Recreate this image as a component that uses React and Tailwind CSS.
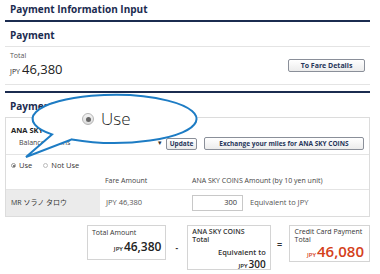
export default function App() {
  return (
    <div className="relative w-[380px] h-[274px] overflow-hidden bg-white text-[#333] font-['Open_Sans','Noto_Sans_CJK_JP',sans-serif]">
      <div className="w-[365px] ml-[5px]">
        <h1 className="h-[20px] pl-[5px] pt-[2px] text-[10px] font-bold text-[#1b2c50]">Payment Information Input</h1>
        <div className="h-[2px] bg-[#1b2c50]" />
        <h2 className="h-[25px] pl-[5px] pt-[6px] text-[10px] font-bold text-[#1b2c50] border-b border-[#e4e4e4]">Payment</h2>
        <div className="h-[38px] flex items-center justify-between pl-[5px] pr-[5px] border-b border-[#e4e4e4]">
          <div className="flex flex-col">
            <span className="text-[7px] leading-[8px] text-[#555]">Total</span>
            <span className="mt-[2px] text-[13px] leading-[14px] font-medium text-[#222]"><span className="text-[7px] mr-[2px]">JPY</span>46,380</span>
          </div>
          <button className="w-[77px] h-[13px] border border-[#8a8f99] rounded-[2px] bg-gradient-to-b from-white to-[#ececec] text-[7px] font-bold text-[#27365a] leading-[11px]">To Fare Details</button>
        </div>
        <div className="h-[2px] bg-[#1b2c50] mt-[6px]" />
        <h2 className="h-[24px] pl-[5px] pt-[6px] text-[10px] font-bold text-[#1b2c50]">Payment Method</h2>
        <div className="border border-[#dcdcdc]">
          <div className="h-[37px] border-b border-[#e4e4e4] pl-[5px] pt-[8px]">
            <div className="text-[7.5px] leading-[9px] font-bold text-[#222]">ANA SKY COINS</div>
            <div className="flex items-center mt-[2px]">
              <span className="pl-[8px] pr-[4px] w-[155px] flex justify-between text-[7px] text-[#444]">
                <span>Balance 0 Coins</span>
                <span className="text-[#333]">▾</span>
              </span>
              <button className="w-[31px] h-[12px] border border-[#8a8f99] rounded-[2px] bg-gradient-to-b from-white to-[#ececec] text-[6.5px] font-bold text-[#27365a]">Update</button>
              <button className="ml-[7px] w-[160px] h-[13px] border border-[#8a8f99] rounded-[2px] bg-gradient-to-b from-white to-[#ececec] text-[6.5px] font-bold text-[#27365a]">Exchange your miles for ANA SKY COINS</button>
            </div>
          </div>
          <div className="h-[19px] flex items-center pl-[5px] pt-[2px] text-[7.5px] text-[#333]">
            <span className="w-[5px] h-[5px] rounded-full border border-[#999] flex items-center justify-center"><span className="w-[2px] h-[2px] rounded-full bg-[#555]" /></span>
            <span className="ml-[3px]">Use</span>
            <span className="ml-[11px] w-[5px] h-[5px] rounded-full border border-[#bbb]" />
            <span className="ml-[3px]">Not Use</span>
          </div>
          <div className="h-[16px] flex items-center border-b border-[#e4e4e4] text-[7px] text-[#444]">
            <span className="w-[94px]" />
            <span className="w-[92px] pl-[5px]">Fare Amount</span>
            <span>ANA SKY COINS Amount (by 10 yen unit)</span>
          </div>
          <div className="h-[26px] flex items-stretch text-[7.5px] text-[#333]">
            <div className="w-[94px] bg-[#ebebeb] flex items-center pl-[5px] text-[7px]">MR ソラノ タロウ</div>
            <div className="w-[92px] flex items-center pl-[6px] text-[#555]">JPY 46,380</div>
            <div className="flex items-center">
              <div className="w-[51px] h-[16px] border border-[#c8c8c8] flex items-center justify-end pr-[5px] text-[7.5px]">300</div>
              <span className="ml-[7px] text-[#555]">Equivalent to JPY</span>
            </div>
          </div>
        </div>
        <div className="flex items-start mt-[8px]">
          <div className="ml-[82px] w-[80px] h-[35px] border border-[#d4d4d4] px-[4px] pt-[2px] flex flex-col">
            <span className="text-[7px] leading-[9px] text-[#333]">Total Amount</span>
            <span className="self-end mt-[3px] text-[12px] leading-[14px] font-semibold text-[#222]"><span className="text-[6px] mr-[1px]">JPY</span>46,380</span>
          </div>
          <span className="w-[21px] text-center mt-[17px] text-[8px] font-bold">-</span>
          <div className="w-[84px] h-[45px] border border-[#d4d4d4] px-[4px] pt-[2px] flex flex-col">
            <span className="text-[7px] leading-[8px] font-semibold text-[#333]">ANA SKY COINS<br />Total</span>
            <span className="self-end mt-[4px] text-[7.5px] leading-[8px] font-semibold text-[#333]">Equivalent to</span>
            <span className="self-end mt-[2px] text-[10px] leading-[12px] font-semibold text-[#222]"><span className="text-[6px] mr-[1px]">JPY</span>300</span>
          </div>
          <span className="w-[18px] text-center mt-[13px] text-[9px] font-bold">=</span>
          <div className="w-[82px] h-[37px] border border-[#d4d4d4] px-[5px] pt-[2px] flex flex-col">
            <span className="text-[7px] leading-[8px] text-[#333]">Credit Card Payment<br />Total</span>
            <span className="self-end -mt-[1px] text-[15px] leading-[17px] font-semibold text-[#d4401a]"><span className="text-[6px] mr-[1px]">JPY</span>46,080</span>
          </div>
        </div>
      </div>

      <div className="absolute left-[20px] top-[90px] w-[185px] h-[75px]">
        <svg width="185" height="75" viewBox="20 90 185 75" className="absolute left-0 top-0">
          <path d="M52 134.4 L26 157 L72 139.4 A82 24 0 1 0 52 134.4 Z" fill="white" stroke="#1d7cc4" strokeWidth="2" />
        </svg>
        <div className="absolute left-[62px] top-[19px] flex items-center">
          <span className="w-[12px] h-[12px] rounded-full border border-[#b5b5b5] bg-gradient-to-b from-[#f4f4f4] to-[#dcdcdc] flex items-center justify-center">
            <span className="w-[5px] h-[5px] rounded-full bg-[#666]" />
          </span>
          <span className="ml-[7px] text-[17px] leading-[20px] font-light text-[#222]">Use</span>
        </div>
      </div>
    </div>
  );
}
